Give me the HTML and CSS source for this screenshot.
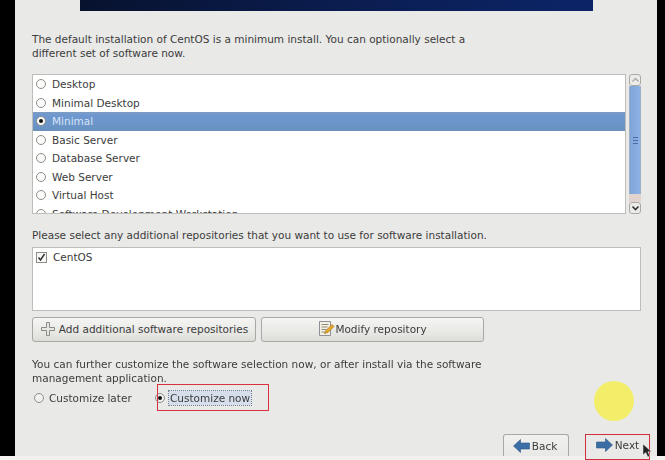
FILE: index.html
```html
<!DOCTYPE html>
<html lang="en">
<head>
<meta charset="utf-8">
<title>CentOS software selection</title>
<link rel="stylesheet" href="styles.css">
</head>
<body>
<div class="screen">
  <div class="edge edge-left"></div>
  <main class="panel">
    <div class="banner"></div>
    <p class="text intro">The default installation of CentOS is a minimum install. You can optionally select a<br>different set of software now.</p>
    <div class="list-row">
      <div class="list box">
        <div class="item"><span class="radio"></span>Desktop</div>
        <div class="item"><span class="radio"></span>Minimal Desktop</div>
        <div class="item selected"><span class="radio on"></span>Minimal</div>
        <div class="item"><span class="radio"></span>Basic Server</div>
        <div class="item"><span class="radio"></span>Database Server</div>
        <div class="item"><span class="radio"></span>Web Server</div>
        <div class="item"><span class="radio"></span>Virtual Host</div>
        <div class="item"><span class="radio"></span>Software Development Workstation</div>
      </div>
      <div class="scrollbar">
        <div class="step">
          <svg width="9" height="6" viewBox="0 0 9 6"><path d="M1.5 4.5 4.5 1.5 7.5 4.5" fill="none" stroke="#aaa" stroke-width="1.4"/></svg>
        </div>
        <div class="thumb"><span class="grip"></span><span class="grip"></span><span class="grip"></span></div>
        <div class="trough-end"></div>
        <div class="step">
          <svg width="9" height="6" viewBox="0 0 9 6"><path d="M1.5 1.5 4.5 4.5 7.5 1.5" fill="none" stroke="#333" stroke-width="1.6"/></svg>
        </div>
      </div>
    </div>
    <p class="text repo-label">Please select any additional repositories that you want to use for software installation.</p>
    <div class="repos box">
      <div class="item">
        <span class="check"><svg width="9" height="9" viewBox="0 0 9 9"><path d="M1.5 4.5 3.5 7 7.5 1" fill="none" stroke="#333" stroke-width="1.5"/></svg></span>CentOS
      </div>
    </div>
    <div class="repo-actions">
      <div class="button add">
        <svg width="16" height="16" viewBox="0 0 16 16"><path d="M6.5 1.5h3v5h5v3h-5v5h-3v-5h-5v-3h5z" fill="#e6e6e2" stroke="#8a8a86"/></svg>
        Add additional software repositories
      </div>
      <div class="button modify">
        <svg width="17" height="17" viewBox="0 0 17 17"><path d="M1.5 1.5h11v14h-11z" fill="#f4f1e2" stroke="#8f8f9a"/><path d="M3.5 4.5h7M3.5 7h6M3.5 9.5h5M3.5 12h4" stroke="#8d8d80"/><path d="M6.500 13.500 8 10.500 14 4.500 16 6.500 10 12.500z" fill="#e8a92a" stroke="#9a6a12" stroke-width=".6"/></svg>
        Modify repository
      </div>
    </div>
    <p class="text further">You can further customize the software selection now, or after install via the software<br>management application.</p>
    <div class="customize">
      <div class="choice later"><span class="radio flat"></span>Customize later</div>
      <div class="choice now"><span class="radio flat on"></span><span class="focus">Customize now</span></div>
    </div>
    <div class="nav">
      <div class="button nav-button back">
        <svg width="17" height="14" viewBox="0 0 17 14"><path d="M0.500 7 7.500 0.500V4H16.500V10H7.500V13.500z" fill="#3a6ea5" stroke="#2b5688" stroke-width=".6"/></svg>
        Back
      </div>
      <div class="button nav-button next">
        <svg width="17" height="14" viewBox="0 0 17 14"><path d="M16.500 7 9.500 0.500V4H0.500V10H9.500V13.500z" fill="#3a6ea5" stroke="#2b5688" stroke-width=".6"/></svg>
        Next
      </div>
    </div>
    <div class="marker-circle"></div>
    <div class="marker-box"></div>
    <svg class="cursor" width="11" height="15" viewBox="0 0 11 15"><path d="M1 1V12L3.800 9.600 5.800 14 7.800 13 5.900 8.800H9.500z" fill="#222" stroke="#eee" stroke-width=".5"/></svg>
  </main>
  <div class="edge edge-right"></div>
</div>
</body>
</html>
```

FILE: styles.css
```css
html, body {
  margin: 0;
  padding: 0;
  background: #f3f3f1;
}

.screen {
  display: flex;
  width: 665px;
  height: 460px;
  overflow: hidden;
  font-family: "DejaVu Sans", sans-serif;
  font-size: 10.5px;
  color: #3c3c3c;
  filter: blur(0.4px);
}

.edge {
  background: #000;
  height: 456px;
  flex: none;
}

.edge-left { width: 15px; }
.edge-right { width: 8px; }

.panel {
  position: relative;
  flex: 1;
  display: flex;
  flex-direction: column;
  box-sizing: border-box;
  padding: 0 16px 0 17px;
  background: linear-gradient(#e9e9e7 456px, #f0f0ee 456px);
}

.banner {
  flex: none;
  width: 513px;
  height: 11px;
  margin-left: 48px;
  background: linear-gradient(90deg, #07122e, #0b1f55 60%, #0c2467);
}

.text {
  margin: 0;
  line-height: 14px;
}

.intro { margin-top: 21px; }

.list-row {
  display: flex;
  gap: 3px;
  margin-top: 14px;
  height: 140px;
}

.box {
  box-sizing: border-box;
  background: #fff;
  border: 1px solid #bdbdb9;
  overflow: hidden;
}

.list {
  flex: 1;
}

.item {
  display: flex;
  align-items: center;
  gap: 6px;
  height: 18.5px;
  padding-left: 3px;
  flex: none;
}

.selected {
  background: linear-gradient(#7f9cc0, #6f98d2 15%, #6a93c4 85%, #6b90ba);
  color: #d5e4f5;
}

.radio {
  box-sizing: border-box;
  width: 10px;
  height: 10px;
  border: 1px solid #8d8d8a;
  border-radius: 50%;
  background: #fbfbfa;
  flex: none;
  display: flex;
  align-items: center;
  justify-content: center;
}

.radio.on::after {
  content: "";
  width: 4px;
  height: 4px;
  border-radius: 50%;
  background: #111;
}

.radio.flat {
  background: #f0f0ee;
}

.scrollbar {
  width: 12px;
  display: flex;
  flex-direction: column;
}

.step {
  box-sizing: border-box;
  height: 12px;
  flex: none;
  display: flex;
  align-items: center;
  justify-content: center;
  background: #ecebe8;
  border: 1px solid #a9a9a6;
  border-radius: 3px;
}

.thumb {
  flex: 1;
  display: flex;
  flex-direction: column;
  align-items: center;
  justify-content: center;
  gap: 2px;
  background: linear-gradient(90deg, #7fa5d8, #8db2e6);
  border-left: 1px solid #9db0c8;
  border-right: 1px solid #9db0c8;
}

.grip {
  width: 5px;
  height: 1px;
  background: #4a6ea8;
}

.trough-end {
  flex: none;
  height: 8px;
  background: #e2d3cf;
}

.repo-label { margin-top: 14px; }

.repos {
  height: 64px;
  margin-top: 5px;
  padding-top: 0;
}

.check {
  box-sizing: border-box;
  width: 11px;
  height: 11px;
  flex: none;
  border: 1px solid #8d8d8a;
  background: #f8f8f6;
  display: flex;
  align-items: center;
  justify-content: center;
}

.repo-actions {
  display: flex;
  gap: 5px;
  margin-top: 6px;
}

.button {
  box-sizing: border-box;
  height: 25px;
  padding-bottom: 2px;
  display: flex;
  align-items: center;
  justify-content: center;
  gap: 2px;
  background: linear-gradient(#f5f5f3, #e6e6e3 70%, #dcdcd9);
  border: 1px solid #a8a8a4;
  border-radius: 3px;
  white-space: nowrap;
}

.add {
  width: 224px;
  gap: 3px;
}

.modify {
  width: 223px;
  gap: 0;
}

.further { margin-top: 15px; }

.customize {
  display: flex;
  align-items: center;
  height: 14px;
  margin-top: 6px;
}

.choice {
  display: flex;
  align-items: center;
}

.later {
  padding-left: 2px;
  gap: 5px;
  width: 121px;
}

.now {
  gap: 4px;
}

.focus {
  background: #d5deea;
  outline: 1px dotted #6f7f98;
  padding: 0 1px;
  line-height: 14px;
}

.nav {
  display: flex;
  justify-content: flex-end;
  align-items: flex-start;
  gap: 16px;
  margin-top: 29px;
  margin-right: -9px;
  flex: none;
}

.nav-button {
  height: 26px;
  width: 66px;
  background: linear-gradient(#f1f1ef, #e8e8e6);
}

.back {
  height: 22px;
  padding-bottom: 0;
  padding-right: 2px;
  border-bottom: 0;
  border-radius: 3px 3px 0 0;
}

.next {
  border: 1px solid #d0303c;
  border-radius: 0;
  padding-bottom: 4px;
  background: #e9e9e7;
  width: 65px;
}

.marker-circle {
  position: absolute;
  left: 579px;
  top: 381px;
  width: 40px;
  height: 40px;
  border-radius: 50%;
  background: #f2ee6a;
}

.marker-box {
  position: absolute;
  left: 142px;
  top: 384px;
  width: 112px;
  height: 27px;
  box-sizing: border-box;
  border: 1px solid #d8303c;
}

.cursor {
  position: absolute;
  left: 627px;
  top: 443px;
}
```
